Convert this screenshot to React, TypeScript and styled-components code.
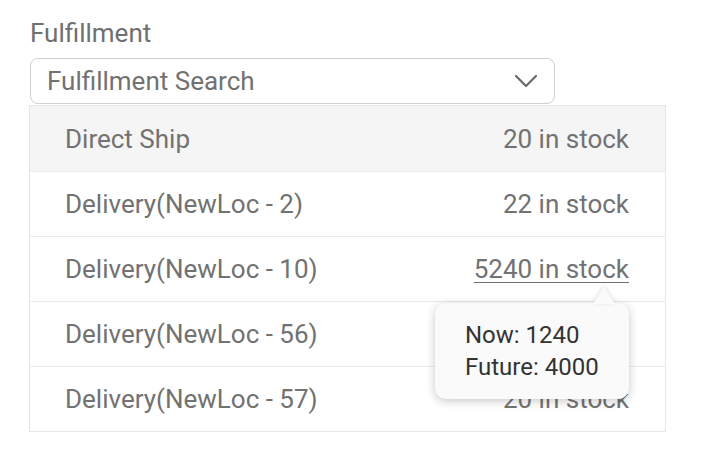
import React from "react";
import styled, { createGlobalStyle } from "styled-components";

const Global = createGlobalStyle`
  html, body { margin: 0; padding: 0; background: #ffffff; }
  body { font-family: Roboto, "Noto Sans", Arial, sans-serif; }
`;

const Page = styled.div`
  padding: 18px 0 0 29px;
  width: 637px;
`;

const Label = styled.div`
  font-size: 26px;
  line-height: 30px;
  color: #707070;
  padding-left: 1px;
  margin-bottom: 10px;
`;

const Select = styled.div`
  box-sizing: border-box;
  width: 525px;
  height: 46px;
  margin-left: 1px;
  border: 1.5px solid #cfcfcf;
  border-radius: 8px;
  display: flex;
  align-items: center;
  justify-content: space-between;
  padding: 0 16px 0 16px;
  font-size: 26px;
  color: #727272;
`;

const List = styled.div`
  box-sizing: border-box;
  margin-top: 1px;
  width: 637px;
  border: 1px solid #e6e6e6;
  position: relative;
`;

const Row = styled.div<{ $active?: boolean }>`
  box-sizing: border-box;
  height: 65px;
  display: flex;
  align-items: center;
  justify-content: space-between;
  padding: 0 36px 0 35px;
  font-size: 26px;
  color: #727272;
  background: ${(p) => (p.$active ? "#f5f5f5" : "#ffffff")};
  & + & {
    border-top: 1px solid #ebebeb;
  }
`;

const Stock = styled.span<{ $link?: boolean }>`
  position: relative;
  text-decoration: ${(p) => (p.$link ? "underline" : "none")};
  text-underline-offset: 4px;
  text-decoration-thickness: 1px;
`;

const Tooltip = styled.div`
  position: absolute;
  top: 49px;
  right: 0;
  width: 194px;
  box-sizing: border-box;
  padding: 16px 0 16px 30px;
  background: #fafafa;
  border-radius: 11px;
  box-shadow: 0 2px 10px rgba(0, 0, 0, 0.22);
  font-size: 24px;
  line-height: 32px;
  color: #333333;
  text-decoration: none;
  z-index: 2;

  &::before {
    content: "";
    position: absolute;
    top: -17px;
    right: 14px;
    width: 0;
    height: 0;
    border-left: 11px solid transparent;
    border-right: 11px solid transparent;
    border-bottom: 18px solid #fafafa;
    filter: drop-shadow(0 -1px 2px rgba(0, 0, 0, 0.12));
  }
`;

const Chevron = () => (
  <svg width="24" height="14" viewBox="0 0 24 14" fill="none">
    <path d="M2 2 L12 12 L22 2" stroke="#6a6a6a" strokeWidth="2.2" strokeLinecap="round" strokeLinejoin="round" />
  </svg>
);

const rows = [
  { name: "Direct Ship", stock: "20 in stock", active: true },
  { name: "Delivery(NewLoc - 2)", stock: "22 in stock" },
  { name: "Delivery(NewLoc - 10)", stock: "5240 in stock", link: true },
  { name: "Delivery(NewLoc - 56)", stock: "20 in stock" },
  { name: "Delivery(NewLoc - 57)", stock: "20 in stock" },
];

export default function App() {
  return (
    <>
      <Global />
      <Page>
        <Label>Fulfillment</Label>
        <Select>
          <span>Fulfillment Search</span>
          <Chevron />
        </Select>
        <List>
          {rows.map((r) => (
            <Row key={r.name} $active={r.active}>
              <span>{r.name}</span>
              <Stock $link={r.link}>
                {r.stock}
                {r.link && (
                  <Tooltip>
                    Now: 1240
                    <br />
                    Future: 4000
                  </Tooltip>
                )}
              </Stock>
            </Row>
          ))}
        </List>
      </Page>
    </>
  );
}
